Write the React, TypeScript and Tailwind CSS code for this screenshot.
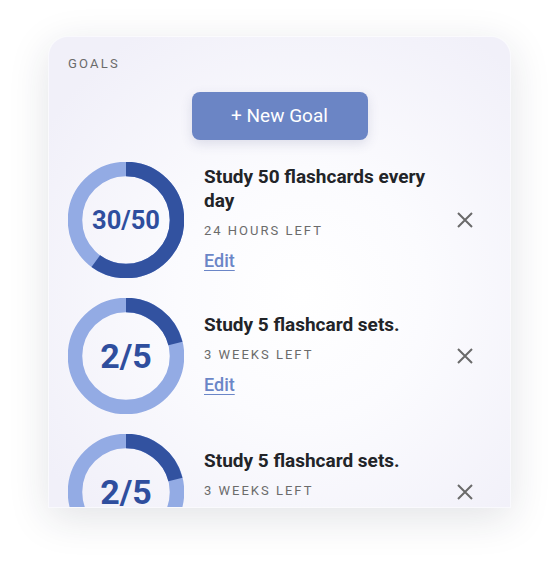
import React from "react";

type Goal = {
  value: string;
  frac: number;
  title: string;
  left: string;
  size: string;
};

const goals: Goal[] = [
  { value: "30/50", frac: 0.6, title: "Study 50 flashcards every day", left: "24 HOURS LEFT", size: "text-[25.5px]" },
  { value: "2/5", frac: 0.21, title: "Study 5 flashcard sets.", left: "3 WEEKS LEFT", size: "text-[34px]" },
  { value: "2/5", frac: 0.21, title: "Study 5 flashcard sets.", left: "3 WEEKS LEFT", size: "text-[34px]" },
];

function Ring({ frac, value, size }: { frac: number; value: string; size: string }) {
  const r = 51;
  const c = 2 * Math.PI * r;
  return (
    <div className="relative w-[116px] h-[116px] shrink-0">
      <svg width="116" height="116" viewBox="0 0 116 116" className="absolute inset-0">
        <circle cx="58" cy="58" r={r} fill="none" stroke="#93abe4" strokeWidth="14.5" />
        <circle
          cx="58"
          cy="58"
          r={r}
          fill="none"
          stroke="#3252a0"
          strokeWidth="14.5"
          strokeDasharray={`${c * frac} ${c}`}
          transform="rotate(-90 58 58)"
        />
      </svg>
      <div className={`absolute inset-0 flex items-center justify-center font-bold text-[#2f4e9e] ${size}`}>
        {value}
      </div>
    </div>
  );
}

function XIcon() {
  return (
    <svg width="18" height="18" viewBox="0 0 18 18" className="shrink-0">
      <path d="M2 2 L16 16 M16 2 L2 16" stroke="#6a6a6a" strokeWidth="2" strokeLinecap="butt" />
    </svg>
  );
}

export default function App() {
  return (
    <div className="w-[559px] h-[567px] bg-white" style={{ fontFamily: "Roboto, 'Noto Sans', sans-serif" }}>
      <div className="pt-[36px] pl-[48px]">
        <div className="w-[463px] h-[472px] overflow-hidden rounded-t-[20px] bg-[radial-gradient(ellipse_at_55%_55%,#ffffff_0%,#fbfbfe_35%,#f1f0f9_85%)] shadow-[0_10px_40px_rgba(30,40,60,0.13)] border border-white/60 flex flex-col pt-[19px] px-[19px]">
          <div className="text-[13px] leading-4 tracking-[2.2px] text-[#6b6b6b]">GOALS</div>
          <div className="flex justify-center mt-[20px]">
            <button className="w-[176px] h-[48px] rounded-[8px] bg-[#6b85c5] text-white text-[19px] shadow-[0_4px_12px_rgba(60,70,120,0.15)]">
              + New Goal
            </button>
          </div>
          <div className="flex flex-col gap-[20px] mt-[22px]">
            {goals.map((g, i) => (
              <div key={i} className="flex items-center">
                <Ring frac={g.frac} value={g.value} size={g.size} />
                <div className="ml-[20px] w-[242px] flex flex-col -mt-[2px]">
                  <div className="text-[19px] leading-6 font-bold text-[#222428]">{g.title}</div>
                  <div className="mt-[10px] text-[13px] leading-4 tracking-[2px] text-[#6b6b6b]">{g.left}</div>
                  <div className="mt-[10px] text-[18px] leading-6 font-medium text-[#6b86c7] underline underline-offset-[3px] decoration-1">
                    Edit
                  </div>
                </div>
                <div className="ml-[10px]">
                  <XIcon />
                </div>
              </div>
            ))}
          </div>
        </div>
      </div>
    </div>
  );
}
